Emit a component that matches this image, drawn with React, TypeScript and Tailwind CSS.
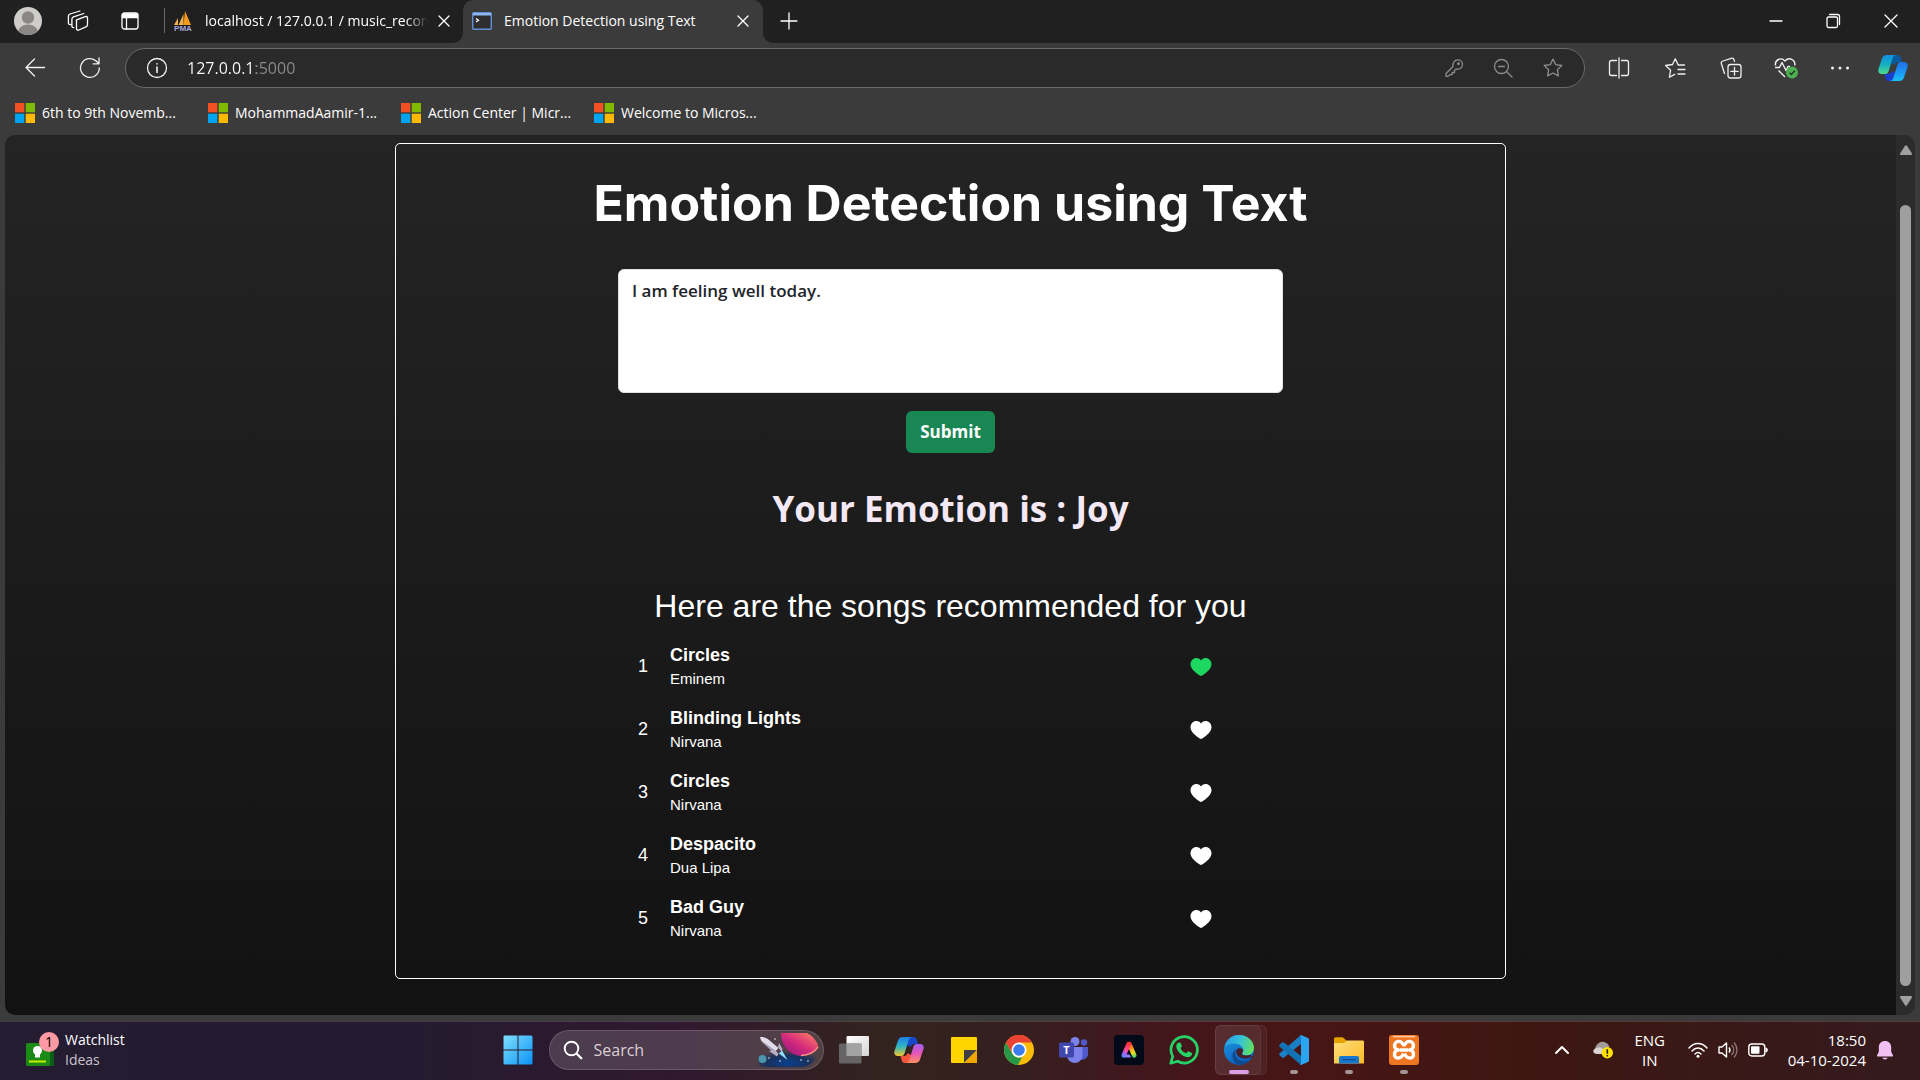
import React, { useState } from "react";

const UI = "font-['Open_Sans','Noto_Sans',sans-serif]";

type IconProps = { className?: string; children: React.ReactNode; box?: string };

function Line({ className = "size-6", children, box = "0 0 24 24" }: IconProps) {
  return (
    <svg
      viewBox={box}
      className={`shrink-0 ${className}`}
      fill="none"
      stroke="currentColor"
      strokeWidth="1.3"
      strokeLinecap="round"
      strokeLinejoin="round"
      aria-hidden="true"
    >
      {children}
    </svg>
  );
}

function Art({ className = "size-[30px]", children, box = "0 0 30 30" }: IconProps) {
  return (
    <svg viewBox={box} className={`shrink-0 ${className}`} aria-hidden="true">
      {children}
    </svg>
  );
}

const Close = () => (
  <Line className="size-4" box="0 0 16 16">
    <path d="M3 3l10 10M13 3L3 13" />
  </Line>
);

const MicrosoftLogo = () => (
  <Art className="size-5" box="0 0 20 20">
    <path fill="#f25022" d="M0 0h9.3v9.3H0z" />
    <path fill="#7fba00" d="M10.700 0H20v9.3h-9.3z" />
    <path fill="#00a4ef" d="M0 10.700h9.3V20H0z" />
    <path fill="#ffb900" d="M10.700 10.700H20V20h-9.3z" />
  </Art>
);

function Copilot({ vivid = false }: { vivid?: boolean }) {
  const id = vivid ? "cv" : "cb";
  return (
    <Art className="h-[28px] w-[30px]" box="0 0 30 28">
      <defs>
        <linearGradient id={`${id}1`} x1="0" y1="0" x2="0" y2="1">
          <stop offset="0" stopColor={vivid ? "#1f7fe8" : "#0e8fe0"} />
          <stop offset=".5" stopColor={vivid ? "#2fb5c0" : "#14b0c4"} />
          <stop offset="1" stopColor={vivid ? "#f4c82c" : "#4fdb8c"} />
        </linearGradient>
        <linearGradient id={`${id}2`} x1="0" y1="0" x2="0" y2="1">
          <stop offset="0" stopColor={vivid ? "#a45df0" : "#1f6fe6"} />
          <stop offset=".5" stopColor={vivid ? "#e556b8" : "#1c93f5"} />
          <stop offset="1" stopColor={vivid ? "#ff8f5a" : "#1cc0f4"} />
        </linearGradient>
      </defs>
      <path fill={vivid ? "#1647c9" : "#0a5a9e"} d="M14 1h5.500c2 0 2.800 1 3.300 2.800L24 8h-3.500c-2.300 0-3.200 1-3.900 3l-3.600-2z" />
      <path fill={vivid ? "#f2543c" : "#1a3fd0"} d="M16 27h-5c-2 0-2.800-1-3.300-2.800L6.500 20H10c2 0 3-1 3.700-3l3.300 2z" />
      <path fill={`url(#${id}1)`} d="M9 1h9c-2.200.4-3 2-3.600 4l-3.900 12.500c-.6 1.700-1.500 2.500-3.500 2.500H4c-3 0-4.300-2.200-3.500-5L4 4.500C4.800 2 6.500 1 9 1z" />
      <path fill={`url(#${id}2)`} d="M21 27h-9c2.200-.4 3-2 3.600-4l3.900-12.500C20.100 8.800 21 8 23 8h3c3 0 4.300 2.200 3.500 5L26 23.500c-.8 2.500-2.500 3.500-5 3.500z" />
    </Art>
  );
}

function IconButton({ label, className, children }: { label: string; className: string; children: React.ReactNode }) {
  return (
    <button type="button" aria-label={label} className={`flex shrink-0 items-center justify-center ${className}`}>
      {children}
    </button>
  );
}

function TabStrip() {
  return (
    <header className="flex h-[43px] text-[14px] text-white">
      <div className="flex items-center rounded-br-[10px] bg-[#202020] pb-0.5">
        <IconButton label="Profile" className="w-14">
          <Art className="size-7" box="0 0 28 28">
            <clipPath id="avatar"><circle cx="14" cy="14" r="14" /></clipPath>
            <g clipPath="url(#avatar)">
              <path fill="#cfcdca" d="M0 0h28v28H0z" />
              <circle cx="14" cy="10.500" r="6.200" fill="#8a8886" />
              <ellipse cx="14" cy="24" rx="9.500" ry="6.500" fill="#8a8886" />
            </g>
          </Art>
        </IconButton>
        <IconButton label="Workspaces" className="w-[43px]">
          <Line className="size-[22px]" box="0 0 22 22">
            <path d="M9.500 9.800l8.800-3.200c1.300-.5 2.200 0 2.200 1.300v6.600c0 1.200-.5 2-1.600 2.400l-7 3.100c-1.500.6-2.400 0-2.400-1.400zM6.800 17.600c-1.200.2-1.900-.4-1.900-1.600V9.200c0-1.200.5-1.900 1.600-2.300L16.800 3.500M3.600 14.500c-1.400.3-2.200-.3-2.200-1.500V6.300c0-1.200.5-1.900 1.600-2.300L12.900 1" />
          </Line>
        </IconButton>
        <IconButton label="Tab actions" className="w-[62px]">
          <Line className="size-[18px]" box="0 0 18 18">
            <rect x="1" y="1" width="16" height="16" rx="2.500" />
            <path d="M1.500 2h15v3.500h-15z" fill="currentColor" />
            <path d="M5.500 5v12" />
          </Line>
        </IconButton>
        <span className="ml-[3px] h-[25px] w-px bg-[#6a6a6a]" />
        <div className="flex w-[298px] items-center gap-3 pl-2">
          <Art className="size-5" box="0 0 20 20">
            <path fill="#f59a1c" d="M12 0l6 14h-7.500z" />
            <path fill="#f2b04c" d="M10.500 3v11H5.500zM5 7v7H1z" />
            <text x="10" y="20" fontSize="8" fontWeight="700" textAnchor="middle" fill="#a3a5dc" fontFamily="Liberation Sans">PMA</text>
          </Art>
          <span className="w-[223px] overflow-hidden whitespace-nowrap [mask-image:linear-gradient(to_right,black_90%,transparent)]">
            localhost / 127.0.0.1 / music_recommendation
          </span>
          <IconButton label="Close tab" className="-ml-1 w-4"><Close /></IconButton>
        </div>
      </div>
      <div className="w-[300px] bg-[linear-gradient(#202020_50%,#3b3b3b_50%)]">
        <div className="flex h-full items-center rounded-t-[10px] bg-[#3b3b3b] pr-3 pb-0.5 pl-[9px]">
          <Art className="mr-3 h-[18px] w-5" box="0 0 20 18">
            <rect x=".7" y=".7" width="18.600" height="16.600" rx="1" fill="#2e2e2e" stroke="#5f8fd6" strokeWidth="1.400" />
            <path fill="#8fb6ee" d="M1 1h18v2.500H1z" />
            <path fill="none" stroke="#fff" strokeWidth="1.300" d="M4 6.500l2.500 1.800L4 10" />
          </Art>
          <span className="flex-1 whitespace-nowrap">Emotion Detection using Text</span>
          <IconButton label="Close tab" className="w-4"><Close /></IconButton>
        </div>
      </div>
      <div className="flex flex-1 items-center rounded-bl-[10px] bg-[#202020] pb-0.5">
        <IconButton label="New tab" className="w-[52px]">
          <Line className="size-[18px]" box="0 0 18 18"><path d="M9 1v16M1 9h16" /></Line>
        </IconButton>
        <div className="ml-auto flex">
          <IconButton label="Minimize" className="w-[57px]">
            <Line className="size-4" box="0 0 16 16"><path d="M2 8h12" /></Line>
          </IconButton>
          <IconButton label="Restore" className="w-[58px]">
            <Line className="size-4" box="0 0 16 16">
              <rect x="2" y="4" width="10.500" height="10.500" rx="1.500" />
              <path d="M4.500 1.500h8c1.200 0 2 .8 2 2v8" />
            </Line>
          </IconButton>
          <IconButton label="Close window" className="w-[58px]">
            <Line className="size-4" box="0 0 16 16"><path d="M2 2l12 12M14 2L2 14" /></Line>
          </IconButton>
        </div>
      </div>
    </header>
  );
}

const STAR = "M11 2l2.700 5.600 6.100.9-4.400 4.300 1 6.100L11 16l-5.400 2.900 1-6.100L2.200 8.500l6.100-.9z";

function Toolbar() {
  const [url, setUrl] = useState("127.0.0.1:5000");
  return (
    <div className="flex h-[50px] items-center text-[#f0f0f0]">
      <IconButton label="Back" className="ml-2 w-[54px]">
        <Line className="size-[22px]" box="0 0 22 22"><path d="M20.500 10.500H2M10.500 2L2 10.500l8.500 8.500" /></Line>
      </IconButton>
      <IconButton label="Refresh" className="w-14">
        <Line className="size-[22px]" box="0 0 22 22"><path d="M20.300 11A9.400 9.400 0 1 1 17.500 4.300L19.500 6.500M20 1v5.800h-5.800" /></Line>
      </IconButton>
      <div className="ml-[7px] flex h-10 flex-1 items-center rounded-full border border-[#6b6b6b] bg-[#2a2a2a] pl-5 text-[#8c8c8c]">
        <IconButton label="View site information" className="mr-[19px] w-[22px] text-[#f0f0f0]">
          <Line className="size-[22px]" box="0 0 22 22"><circle cx="11" cy="11" r="9.500" /><path d="M11 10v5.500M11 6.800v.2" strokeWidth="1.600" /></Line>
        </IconButton>
        <input
          aria-label="Address"
          value={url}
          onChange={(e) => setUrl(e.target.value)}
          className="min-w-0 flex-1 bg-[linear-gradient(to_right,#ffffff_69px,#8c8c8c_69px)] bg-clip-text text-[16px] leading-7 text-transparent caret-white outline-none"
        />
        <IconButton label="Passwords" className="w-12">
          <Line className="size-5" box="0 0 20 20">
            <path d="M2 15.500l7-7c-.8-3.500 1.600-6.700 5-6.700 2.500 0 4.500 2 4.500 4.600 0 3.200-3 5.500-6.500 4.700L10.500 12.500v2H8.200v2.200H6L4 18.300H2z" /><circle cx="14.500" cy="5.800" r=".8" />
          </Line>
        </IconButton>
        <IconButton label="Zoom out" className="w-[50px]">
          <Line className="size-5" box="0 0 20 20"><circle cx="8.500" cy="8.500" r="7" /><path d="M5.500 8.500h6M13.500 13.500l5.500 5.500" /></Line>
        </IconButton>
        <IconButton label="Add to favorites" className="mr-[6px] w-[50px]">
          <Line className="size-[22px]" box="0 0 22 22"><path d={STAR} /></Line>
        </IconButton>
      </div>
      <div className="ml-[6px] flex">
        <IconButton label="Split screen" className="w-14">
          <Line className="size-[22px]" box="0 0 22 22">
            <path d="M11 1v20M8.500 3.500h-5c-1.200 0-2 .8-2 2v11c0 1.200.8 2 2 2h5M13.500 3.500h5c1.200 0 2 .8 2 2v11c0 1.200-.8 2-2 2h-5" />
          </Line>
        </IconButton>
        <IconButton label="Favorites" className="w-14">
          <Line className="size-[22px]" box="0 0 22 22">
            <path d="M20.500 8h-6.300L11.300 1.800 8.500 7.500l-6.900 1 5 4.800-1.200 6.900 5.300-2.800M14 12.500h7M14 17h7" />
          </Line>
        </IconButton>
        <IconButton label="Collections" className="w-[55px]">
          <Line className="size-[22px]" box="0 0 22 22">
            <rect x="8" y="7.500" width="13" height="13.500" rx="2.500" />
            <path d="M14.500 10.500v7.500M10.800 14.300h7.400M4.500 16.500L1.400 6.800c-.4-1.300.2-2.400 1.500-2.800l8.300-2.700c1.300-.4 2.400.2 2.800 1.500l.5 1.600" />
          </Line>
        </IconButton>
        <IconButton label="Browser essentials" className="w-[55px]">
          <Art className="h-[22px] w-6" box="0 0 24 22">
            <path fill="none" stroke="#f0f0f0" strokeWidth="1.400" strokeLinejoin="round" d="M1.500 8.500C.5 3 7-.5 11 4 15-.5 21.500 2.500 20.800 8.500M1 10.500h4.500l2.500-5 4 8 2-4h2M4.500 13.500l6.500 6.500" />
            <circle cx="18" cy="15.500" r="6" fill="#4caf50" />
            <path fill="none" stroke="#1d3b1e" strokeWidth="1.400" d="M15.500 15.700l1.800 1.800 3.500-3.700" />
          </Art>
        </IconButton>
        <IconButton label="Settings and more" className="w-[54px]">
          <Line className="size-5" box="0 0 20 20"><path strokeWidth="3" d="M2.500 10h.01M10 10h.01M17.500 10h.01" /></Line>
        </IconButton>
        <IconButton label="Copilot" className="mr-px w-[52px]"><Copilot /></IconButton>
      </div>
    </div>
  );
}

const BOOKMARKS = ["6th to 9th Novemb...", "MohammadAamir-1...", "Action Center | Micr...", "Welcome to Micros..."];

function BookmarksBar() {
  return (
    <nav aria-label="Favorites bar" className="flex h-[42px] items-center pb-[3px] pl-[15px] text-[14px] text-white">
      {BOOKMARKS.map((name) => (
        <a key={name} href="#bookmark" className="flex w-[193px] items-center gap-[7px] whitespace-nowrap">
          <MicrosoftLogo />
          {name}
        </a>
      ))}
    </nav>
  );
}

type Song = { title: string; artist: string; liked: boolean };

const SONGS: Song[] = [
  { title: "Circles", artist: "Eminem", liked: true },
  { title: "Blinding Lights", artist: "Nirvana", liked: false },
  { title: "Circles", artist: "Nirvana", liked: false },
  { title: "Despacito", artist: "Dua Lipa", liked: false },
  { title: "Bad Guy", artist: "Nirvana", liked: false },
];

function EmotionPage() {
  const [songs, setSongs] = useState(SONGS);
  const toggle = (index: number) =>
    setSongs(songs.map((song, i) => (i === index ? { ...song, liked: !song.liked } : song)));
  return (
    <main className="flex flex-1 flex-col items-center bg-linear-to-b from-[#242424] to-[#121212] pt-2 text-white">
      <section className="flex w-full max-w-[1111px] flex-col items-center rounded-[5px] border border-white pt-[27px] pb-7">
        <h1 className="font-['Inter',sans-serif] text-[50px] leading-[64px] font-bold whitespace-nowrap">
          Emotion Detection using Text
        </h1>
        <form className="mt-[34px] flex w-full max-w-[665px] flex-col items-center" onSubmit={(e) => e.preventDefault()}>
          <textarea
            aria-label="How are you feeling?"
            defaultValue="I am feeling well today."
            className="h-[124px] w-full resize-none rounded-md border border-[#dee2e6] bg-white px-[13px] py-[7px] text-[17px] leading-[27px] font-semibold text-[#212529] outline-none"
          />
          <button type="submit" className="mt-[18px] h-[42px] rounded-md bg-[#198754] px-[14px] text-[17px] font-bold">
            Submit
          </button>
        </form>
        <h2 className="mt-[33px] text-[35px] leading-[46px] font-bold text-[#f3e8f3]">Your Emotion is : Joy</h2>
        <div className="flex w-full flex-col items-center font-['Liberation_Sans',Arial,sans-serif]">
          <h3 className="mt-[52px] text-[32px] leading-[44px]">Here are the songs recommended for you</h3>
          <ol className="mt-[7px] w-full max-w-[665px]">
            {songs.map((song, i) => (
              <li key={i} className="flex h-[63px] items-center pr-[71px] pl-5">
                <span className="w-8 text-[18px]">{i + 1}</span>
                <div className="flex-1 leading-6">
                  <p className="text-[18px] font-bold">{song.title}</p>
                  <p className="text-[15px]">{song.artist}</p>
                </div>
                <button
                  type="button"
                  aria-label={`Like ${song.title} by ${song.artist}`}
                  aria-pressed={song.liked}
                  onClick={() => toggle(i)}
                  className={song.liked ? "text-[#1ed760]" : "text-white"}
                >
                  <svg viewBox="0 0 22 20" className="h-5 w-[22px]" fill="currentColor" aria-hidden="true">
                    <path d="M11 3.500C9.700 1.700 8.100 1 6.500 1 3.200 1 .5 3.600.5 7.200c0 4.300 4.200 7.800 9.300 11.400.8.600 1.600.6 2.400 0 5.100-3.600 9.300-7.100 9.300-11.400C21.500 3.600 18.800 1 15.500 1c-1.600 0-3.200.7-4.500 2.500z" />
                  </svg>
                </button>
              </li>
            ))}
          </ol>
        </div>
      </section>
    </main>
  );
}

function Scrollbar() {
  return (
    <div className="flex w-[19px] flex-col items-center bg-[#2c2c2c] pt-[10px] pb-[9px]" aria-hidden="true">
      <Art className="h-[10px] w-3" box="0 0 12 10"><path fill="#9f9f9f" d="M5 .8c.6-.8 1.400-.8 2 0l4.800 7.400c.5 1 0 1.800-1 1.800H1.200c-1 0-1.500-.8-1-1.800z" /></Art>
      <div className="mt-[50px] mb-[10px] w-[11px] flex-1 rounded-full bg-[#9f9f9f]" />
      <Art className="h-[10px] w-3" box="0 0 12 10"><path fill="#9f9f9f" d="M5 9.200c.6.800 1.400.8 2 0l4.800-7.400c.5-1 0-1.800-1-1.800H1.200c-1 0-1.500.8-1 1.800z" /></Art>
    </div>
  );
}

const apps: { name: string; running?: boolean; active?: boolean; icon: React.ReactNode }[] = [
  {
    name: "Task view",
    icon: (
      <Art><defs><linearGradient id="tvw" x1="0" y1="0" x2="1" y2="1"><stop stopColor="#fff" /><stop offset="1" stopColor="#d5d5d5" /></linearGradient></defs>
        <rect x="7.500" y="1" width="22.500" height="20" rx="1" fill="url(#tvw)" /><rect x="0" y="8.500" width="22.500" height="20" rx="1" fill="#6b6b6b" opacity=".9" /><rect x="7.500" y="8.500" width="15" height="12.500" fill="#a3a3a3" /></Art>
    ),
  },
  { name: "Copilot", icon: <Copilot vivid /> },
  {
    name: "Sticky Notes",
    icon: <Art className="size-[26px]" box="0 0 26 26"><rect width="26" height="26" rx="1" fill="#ffd400" /><path fill="#3f3f46" d="M13 13h13L13 26z" /><path fill="#f0a800" d="M26 13v13H13z" /></Art>,
  },
  {
    name: "Chrome",
    icon: (
      <Art><circle cx="15" cy="15" r="15" fill="#fbbc05" />
        <path fill="#279847" d="M2 7.500L8.500 18.750A7.500 7.500 0 0 0 18 21.900L14 30A15 15 0 0 1 2 7.500z" />
        <path fill="#e94235" d="M15 7.500h13A15 15 0 0 0 2 7.500l6.500 11.200z" />
        <circle cx="15" cy="15" r="7.500" fill="#fff" /><circle cx="15" cy="15" r="5.800" fill="#3b7ded" /></Art>
    ),
  },
  {
    name: "Teams",
    icon: (
      <Art><circle cx="25" cy="7.500" r="3.200" fill="#5059c9" /><circle cx="16" cy="6.500" r="4.500" fill="#7b83eb" />
        <path fill="#5059c9" d="M19 12h10v8a5.500 5.500 0 0 1-8 4z" /><path fill="#7b83eb" d="M8 12h15.500v9a7.800 7.800 0 0 1-15.500 0z" />
        <rect x="0" y="7.500" width="15" height="15" rx="1.500" fill="#4048b0" /><text x="7.500" y="19" fontSize="11" fontWeight="700" textAnchor="middle" fill="#fff" fontFamily="Open Sans">T</text></Art>
    ),
  },
  {
    name: "Adobe Express",
    icon: (
      <Art>
        <defs>
          <linearGradient id="ax1" x1="15" y1="8" x2="9" y2="22" gradientUnits="userSpaceOnUse"><stop stopColor="#ff3030" /><stop offset=".5" stopColor="#ff4a9a" /><stop offset=".75" stopColor="#a860ff" /><stop offset="1" stopColor="#4a8cff" /></linearGradient>
          <linearGradient id="ax2" x1="15" y1="8" x2="21" y2="22" gradientUnits="userSpaceOnUse"><stop stopColor="#ff3030" /><stop offset=".4" stopColor="#ff9a1c" /><stop offset=".7" stopColor="#e8e020" /><stop offset="1" stopColor="#3fd070" /></linearGradient>
        </defs>
        <rect width="30" height="30" rx="4" fill="#020a1a" />
        <path stroke="url(#ax2)" strokeWidth="4.500" strokeLinecap="round" d="M15.300 9l5 11.500" />
        <path stroke="url(#ax1)" strokeWidth="4.500" strokeLinecap="round" d="M14.700 9l-5 11.500" />
        <path fill="#8f7bff" d="M11 19.500h4.500l1.500 3h-6z" />
      </Art>
    ),
  },
  {
    name: "WhatsApp",
    icon: (
      <Art><path fill="none" stroke="#25d366" strokeWidth="2.700" strokeLinejoin="round" d="M1.800 28.200l1.900-6.900A13.200 13.200 0 1 1 8.700 26.300z" />
        <path fill="#25d366" d="M10.300 7.500c.7-.1 1.200 0 1.500.8l1 2.500c.2.600 0 1-.9 2-.3.400-.3.700 0 1.200 1.200 2 2.600 3.200 4.700 4.100.5.200.8.200 1.200-.3 1.100-1.400 1.300-1.700 2-1.400l2.600 1.300c.6.300.8.500.7 1.100-.2 2.300-2 3.500-4 3.500-2.800-.2-6.200-1.700-8.700-4.600-2.200-2.500-3.400-4.900-3.100-7 .2-1.500 1.300-3 3-3.200z" /></Art>
    ),
  },
  {
    name: "Microsoft Edge",
    running: true,
    active: true,
    icon: (
      <Art><defs>
          <linearGradient id="eg1" x1="0" y1=".3" x2="1" y2=".5"><stop stopColor="#2a9be6" /><stop offset=".5" stopColor="#35c1d8" /><stop offset="1" stopColor="#62e060" /></linearGradient>
          <linearGradient id="eg2" x1="0" y1="0" x2=".5" y2="1"><stop stopColor="#1f9ee0" /><stop offset="1" stopColor="#0b5cc0" /></linearGradient>
        </defs>
        <circle cx="15" cy="15" r="15" fill="url(#eg2)" />
        <path fill="url(#eg1)" d="M.5 12C2 4.500 8 0 15 0c8.500 0 15 6 15 13 0 4.500-3.500 7.500-7.500 7.500-2.500 0-4.500-.7-4.500-1.800 0-.9 1.300-1.500 1.300-3.700C19.300 12 15.500 8.500 10.500 8.500 6 8.500 2.500 10 .5 12z" />
        <path fill="#114a8b" d="M12.500 14c-2 2-1.700 7 1.200 10 2.800 2.900 8.200 3.200 12.800.8C23.500 28.300 20 30 16 30 11 29 8.500 25 8.500 21c0-3.500 1.500-5.800 4-7z" />
        <path fill="#46202a" d="M14 13.500c-2.300 1-2.500 4.800 0 7.500 2.700 2.700 8 3.800 14.500.2.700-.3 1 .1.700.6-.8 1.400-1.700 2.300-2.700 3 2-2.800 1-5-.5-4.700-1.500.5-3.200.5-4 .4-2.500 0-4.200-.8-4-2 .2-.8 1.200-1.500 1.200-3.500 0-1-2.800-2.600-5.200-1.500z" /></Art>
    ),
  },
  {
    name: "Visual Studio Code",
    running: true,
    icon: (
      <Art><path fill="#1a7fc4" d="M22 0v9L5 22.500c-.6.500-1.300.5-1.900 0L.7 20.400c-.7-.6-.7-1.500 0-2.100z" /><path fill="#1173b4" d="M22 30v-9L5 7.500c-.6-.5-1.300-.5-1.900 0L.7 9.600c-.7.600-.7 1.500 0 2.100z" />
        <path fill="#2aa5f2" d="M22 0l7 3c.6.300 1 .8 1 1.500v21c0 .7-.4 1.200-1 1.500L22 30c-.8.200-1.300 0-1.700-.4 1 .5 1.700 0 1.700-1V1.500c0-1-.7-1.600-1.700-1 .4-.5 1-.7 1.700-.5z" /></Art>
    ),
  },
  {
    name: "File Explorer",
    running: true,
    icon: (
      <Art><path fill="#e5a100" d="M0 4c0-1 .6-1.700 1.700-1.700h7L13 6v5H0z" /><defs><linearGradient id="fld" x1="0" y1="0" x2="1" y2="1"><stop stopColor="#ffe07a" /><stop offset="1" stopColor="#fbb92a" /></linearGradient></defs>
        <path fill="url(#fld)" d="M0 8h10l3-2.500h15.500c1 0 1.500.5 1.500 1.500v21.500H0z" /><path fill="#1778d0" d="M5 28.500V23c0-1.300.9-2 2-2h16c1.200 0 2 .7 2 2v5.500z" /><path stroke="#0b4a91" strokeWidth="1.300" d="M8.500 24.700h13" /></Art>
    ),
  },
  {
    name: "XAMPP Control Panel",
    running: true,
    icon: (
      <Art><rect width="30" height="30" rx="3" fill="#ee7623" /><rect x="4" y=".8" width="22" height="1.600" fill="#ffc79c" />
        <path fill="none" stroke="#fff" strokeWidth="3.400" strokeLinejoin="round" d="M14 10a4.300 4.300 0 1 0-4.500 5c-5 0-5.500 8-.7 8 3.200 0 5-2.400 5.700-4.500M16 10a4.300 4.300 0 1 1 4.500 5c5 0 5.500 8 .7 8-3.200 0-5-2.400-5.700-4.500M11 15h8M15 9v2.500" /></Art>
    ),
  },
];

function Taskbar() {
  return (
    <footer className="grid h-[59px] grid-cols-[1fr_auto_1fr] items-center border-t border-white/15 bg-[linear-gradient(to_right,#241c31_0%,#241b30_20%,#31192e_36%,#33231f_46%,#34201f_52%,#42171d_60%,#471515_68%,#3d1712_80%,#341a1d_100%)] pb-0.5 text-[14px] text-white">
      <button type="button" className="flex items-center gap-[11px] justify-self-start pl-[26px] text-left leading-5">
        <span className="relative">
          <Art className="mt-2 h-[23px] w-7" box="0 0 28 23">
            <path fill="#0b5c14" d="M22 1h4.500c1 0 1.500.5 1.500 1.500V23h-6z" /><rect width="24" height="23" rx="1.500" fill="#1c8a16" /><path fill="#c4f000" d="M3 17.500h17v2H3z" />
            <circle cx="11.500" cy="7.500" r="4.500" fill="#fff" /><path fill="#fff" d="M9 10h5v4.500H9z" />
          </Art>
          <span className="absolute -top-[3px] left-[13px] flex size-5 items-center justify-center rounded-full bg-[#ff99a4] text-[14px] text-black">1</span>
        </span>
        <span className="flex flex-col">
          Watchlist
          <span className="text-[#c9c3cc]">Ideas</span>
        </span>
      </button>

      <div className="flex items-center pl-0.5">
        <IconButton label="Start" className="w-[55px]">
          <Art><defs><linearGradient id="win" x1="0" y1="0" x2="1" y2="1"><stop stopColor="#7fe0ff" /><stop offset="1" stopColor="#0a92f5" /></linearGradient></defs>
            <path fill="url(#win)" d="M1.500.5h13v14H.5v-13zM15.500.5h13l1 1v13h-14zM.5 15.500h14v14h-13l-1-1zM15.500 15.500h14v13l-1 1h-13z" /></Art>
        </IconButton>
        <div className="mx-[3px] flex h-10 w-[275px] items-center overflow-hidden rounded-full border border-white/15 bg-white/15 pr-[3px] pl-[13px]">
          <Line className="mr-[11px] size-5" box="0 0 20 20"><circle cx="8.500" cy="8.500" r="6.800" strokeWidth="1.900" /><path strokeWidth="2.300" d="M13.700 13.700l4.600 4.600" /></Line>
          <input aria-label="Search the computer" placeholder="Search" className="min-w-0 flex-1 text-[16px] outline-none placeholder:text-[#d9d0d6]" />
          <Art className="h-[34px] w-[62px]" box="0 0 62 34">
            <defs>
              <radialGradient id="sky" cx=".5" cy=".8" r=".6"><stop stopColor="#0a3f8f" /><stop offset=".6" stopColor="#12305f" stopOpacity=".9" /><stop offset="1" stopColor="#12305f" stopOpacity="0" /></radialGradient>
              <linearGradient id="planet" x1="0" y1="1" x2="1" y2="0"><stop stopColor="#8c1580" /><stop offset=".5" stopColor="#d62b7c" /><stop offset="1" stopColor="#ff8a5c" /></linearGradient>
            </defs>
            <path fill="url(#sky)" d="M0 14h60c0 12-6 20-18 20H4C1 34 0 30 0 28z" />
            <path fill="url(#planet)" d="M23 0h26c6 3 10 8 11.500 14C58 19 51 23 43 23 31 22 23 12 23 0z" />
            <path fill="none" stroke="#ff9a80" strokeWidth="1.300" d="M60 14C57 19 50 22.500 43 22.500" />
            <path fill="#e2dde8" d="M2 4c3.500-.3 6.500.7 9 3l9.500 8-4.500 5L7.500 12C4.500 9.500 2.500 7.500 2 4z" />
            <path fill="#a59bb3" d="M4 8c1 1.500 2 2.700 3.500 4l8.500 8 1.800-2z" />
            <path fill="#b9b0c6" d="M11 18l6-1 3.500 3.500-1.500 3zM20 14l1-4 3.500 6-1 3z" />
            <path fill="#8fe3ff" d="M21 20.500l3-3 5.500 9.500z" />
            <circle cx="4.500" cy="26" r="4" fill="#4a96a8" />
            <path stroke="#fff" strokeWidth="1.500" strokeLinecap="round" d="M11 25h0M22 28h0M43 27h0M50 28h0M17 6h0" />
          </Art>
        </div>
        {apps.map((app) => (
          <button key={app.name} type="button" aria-label={app.name} className="relative flex h-[50px] w-[55px] items-center justify-center">
            {app.active && <span className="absolute inset-y-0 right-0 left-[3px] rounded-md border border-white/5 bg-white/5" />}
            {app.active && <span className="absolute inset-y-0 right-[6px] left-[3px] rounded-md border border-white/5 bg-white/5" />}
            <span className="relative">{app.icon}</span>
            {app.running && (
              <span className={app.active ? "absolute bottom-px h-1 w-5 rounded-full bg-[#dc9fe4]" : "absolute bottom-px h-1 w-2 rounded-full bg-[#a39394]"} />
            )}
          </button>
        ))}
      </div>

      <div className="flex items-center justify-self-end pr-[27px]">
        <IconButton label="Show hidden icons" className="mr-[23px] w-4">
          <Line className="size-4" box="0 0 16 16"><path strokeWidth="2" d="M2 11l6-6 6 6" /></Line>
        </IconButton>
        <IconButton label="OneDrive" className="mr-[21px] w-5">
          <Art className="h-[18px] w-5" box="0 0 20 18">
            <path fill="#a39b9b" d="M2 8c1-5 5-8 9-7 3 .5 4.500 2.500 5.500 5L9 12z" /><path fill="#d9d3d3" d="M3.500 7C5.500 5.500 8 6 10 8l4 5H3.500C-1 12.500-.5 8 3.500 7z" />
            <circle cx="14.300" cy="11.800" r="5.700" fill="#ffe100" /><path stroke="#222" strokeWidth="1.600" d="M14.300 8.300v4.500M14.300 14v1.500" />
          </Art>
        </IconButton>
        <button type="button" className="mr-[22px] w-8 text-center text-[15px] leading-5">ENG IN</button>
        <button type="button" aria-label="Network, volume and battery" className="mr-5 flex items-center gap-2.5">
          <Art className="h-4 w-5" box="0 0 20 16">
            <path fill="none" stroke="#fff" strokeWidth="1.500" strokeLinecap="round" d="M1 6c5-6 13-6 18 0M4 9c3.500-4 8.500-4 12 0M7 12c2-2 4-2 6 0" /><circle cx="10" cy="14.300" r="1.500" fill="#fff" />
          </Art>
          <Art className="h-[18px] w-5" box="0 0 20 18">
            <path fill="none" stroke="#fff" strokeWidth="1.400" strokeLinejoin="round" d="M1 6h3l4.500-4v14L4 12H1zM11 6.500c1.200 1.500 1.200 3.500 0 5" /><path fill="none" stroke="#8d7674" strokeWidth="1.400" d="M13.500 4c3 3 3 7 0 10M16 1.500c4 4.500 4 10.500 0 15" />
          </Art>
          <Art className="h-3.5 w-5" box="0 0 20 14">
            <rect x=".8" y="1" width="16" height="12" rx="3" fill="none" stroke="#fff" strokeWidth="1.400" /><rect x="3" y="3.200" width="8.500" height="7.600" rx="1" fill="#fff" /><path fill="#fff" d="M17.500 4.500c3 0 3 5 0 5z" />
          </Art>
        </button>
        <button type="button" className="mr-[11px] text-right text-[15px] leading-5">
          <time className="flex flex-col"><span>18:50</span><span>04-10-2024</span></time>
        </button>
        <IconButton label="Notifications" className="w-4">
          <Art className="h-[19px] w-4" box="0 0 16 19"><path fill="#f2bff2" d="M8 0c3.700 0 6.200 2.600 6.200 6.300v4.500L16 14.500c.2.600 0 1-.8 1H.8c-.8 0-1-.4-.8-1l1.800-3.700V6.300C1.800 2.600 4.300 0 8 0zM5.300 16.700h5.400a2.800 2.300 0 0 1-5.400 0z" /></Art>
        </IconButton>
      </div>
    </footer>
  );
}

export default function App() {
  return (
    <div className={`flex min-h-screen flex-col bg-[#3b3b3b] ${UI}`}>
      <TabStrip />
      <Toolbar />
      <BookmarksBar />
      <div className="mx-[5px] mb-[6px] flex flex-1 overflow-hidden rounded-[10px]">
        <EmotionPage />
        <Scrollbar />
      </div>
      <Taskbar />
    </div>
  );
}
